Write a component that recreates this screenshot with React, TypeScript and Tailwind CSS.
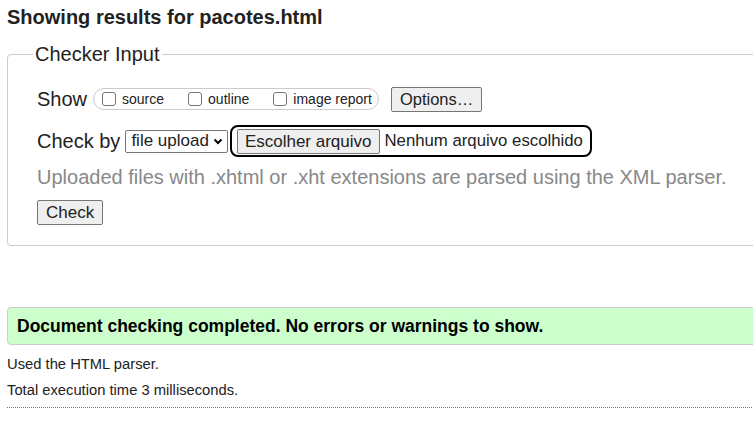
import React from "react";

const font = { fontFamily: '"Liberation Sans", Arial, sans-serif' };

function Checkbox({ label, className = "" }: { label: string; className?: string }) {
    return (
        <label className={`flex items-center gap-[6px] ${className}`}>
            <span className="w-[14px] h-[14px] rounded-[3px] border border-[#767676] bg-white shrink-0" />
            <span className="text-[14px] text-[#222]">{label}</span>
        </label>
    );
}

export default function App() {
    return (
        <div className="w-[753px] h-[423px] overflow-hidden bg-white text-[#222]" style={font}>
            <div className="w-[820px] pl-[7px]">
                {/* Heading */}
                <h2 className="text-[20px] font-bold leading-[24px] pt-[5px] text-[#222]">
                    Showing results for pacotes.html
                </h2>

                {/* Checker Input fieldset */}
                <fieldset className="mt-[14px] border border-[#ccc] rounded-[4px] pl-[29px] pt-[20px] pb-[20px]">
                    <legend className="text-[20px] leading-[23px] px-[2px] -ml-[4px] text-[#222]">
                        Checker Input
                    </legend>

                    {/* Show row */}
                    <div className="flex items-center h-[26px]">
                        <span className="text-[20px] mr-[6px]">Show</span>
                        <div className="flex items-center h-[22px] border border-[#ccc] rounded-full pl-[8px] pr-[6px]">
                            <Checkbox label="source" />
                            <Checkbox label="outline" className="ml-[24px]" />
                            <Checkbox label="image report" className="ml-[24px]" />
                        </div>
                        <button className="ml-[12px] h-[25px] px-[8px] text-[16.5px] leading-none bg-[#efefef] border border-[#767676] rounded-[2px]">
                            Options…
                        </button>
                    </div>

                    {/* Check by row */}
                    <div className="flex items-center mt-[13px] h-[32px]">
                        <span className="text-[20px]">Check by</span>
                        <div className="ml-[5px] flex items-center h-[23px] border border-[#767676] rounded-[2px] pl-[5px] pr-[3px] text-[17px]">
                            <span>file upload</span>
                            <svg width="12" height="12" viewBox="0 0 12 12" className="ml-[3px]">
                                <path d="M2.5 4.5 L6 8 L9.5 4.5" fill="none" stroke="#000" strokeWidth="2" />
                            </svg>
                        </div>
                        <div className="ml-[2px] flex items-center h-[32px] border-2 border-black rounded-[8px] pl-[5px] pr-[7px]">
                            <button className="h-[25px] px-[7px] text-[17px] leading-none bg-[#efefef] border border-[#767676] rounded-[2px]">
                                Escolher arquivo
                            </button>
                            <span className="ml-[5px] text-[16.75px]">Nenhum arquivo escolhido</span>
                        </div>
                    </div>

                    <p className="mt-[7px] text-[20px] leading-[26px] text-[#888] whitespace-nowrap">
                        Uploaded files with .xhtml or .xht extensions are parsed using the XML parser.
                    </p>

                    <button className="mt-[10px] h-[25px] px-[8px] text-[17px] leading-none bg-[#efefef] border border-[#767676] rounded-[2px]">
                        Check
                    </button>
                </fieldset>

                {/* Result */}
                <div className="mt-[61px] h-[38px] flex items-center pl-[9px] bg-[#ccffcc] border border-[#ccc] rounded-[4px]">
                    <span className="text-[17.5px] font-bold text-black">
                        Document checking completed. No errors or warnings to show.
                    </span>
                </div>

                <p className="mt-[10px] text-[14.75px] leading-[18px]">Used the HTML parser.</p>
                <p className="mt-[8px] text-[14.75px] leading-[18px]">Total execution time 3 milliseconds.</p>

                <hr className="mt-[8px] border-0 border-t border-dotted border-[#777]" />
            </div>
        </div>
    );
}
